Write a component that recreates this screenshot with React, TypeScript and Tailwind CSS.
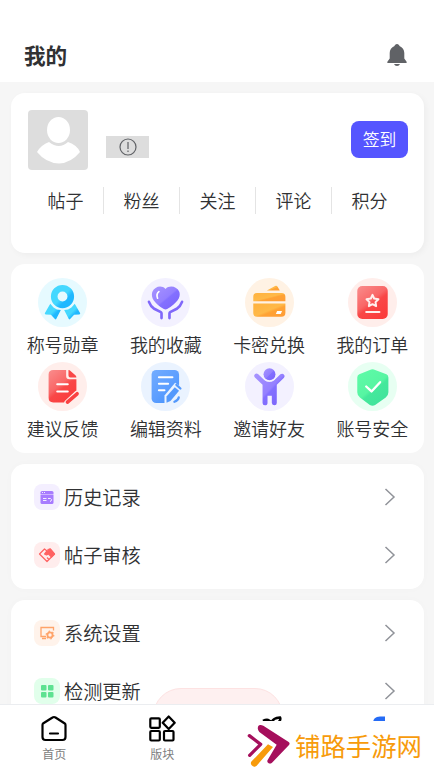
import type { ReactNode } from "react"

const stats = ["帖子", "粉丝", "关注", "评论", "积分"]

function Gradients() {
  return (
    <svg className="absolute h-0 w-0" aria-hidden="true">
      <defs>
        <linearGradient id="cyan" x1="0" y1="0" x2="1" y2="1">
          <stop offset="0.5" stopColor="#45d8ff" />
          <stop offset="0.65" stopColor="#20b8ff" />
        </linearGradient>
        <linearGradient id="purple" x1="0" y1="0" x2="1" y2="1">
          <stop offset="0" stopColor="#a794ff" />
          <stop offset="0.5" stopColor="#9480ff" />
          <stop offset="0.55" stopColor="#8370ff" />
          <stop offset="1" stopColor="#7a62fa" />
        </linearGradient>
        <linearGradient id="orange" x1="0" y1="0" x2="1" y2="1">
          <stop offset="0" stopColor="#ffb23f" />
          <stop offset="0.5" stopColor="#ffb948" />
          <stop offset="0.6" stopColor="#ffa234" />
          <stop offset="1" stopColor="#ff9c36" />
        </linearGradient>
        <linearGradient id="red" x1="0" y1="0" x2="0.7" y2="1">
          <stop offset="0" stopColor="#f98d8d" />
          <stop offset="0.5" stopColor="#f96666" />
          <stop offset="0.62" stopColor="#f94747" />
          <stop offset="1" stopColor="#fb3c3c" />
        </linearGradient>
        <linearGradient id="blue" x1="0" y1="0" x2="0.8" y2="1">
          <stop offset="0" stopColor="#73acff" />
          <stop offset="0.6" stopColor="#5c9eff" />
          <stop offset="1" stopColor="#4592fc" />
        </linearGradient>
        <linearGradient id="green" x1="0" y1="0" x2="0.7" y2="1">
          <stop offset="0" stopColor="#5ffba8" />
          <stop offset="0.57" stopColor="#57f5a2" />
          <stop offset="0.65" stopColor="#45e89b" />
          <stop offset="1" stopColor="#40e39c" />
        </linearGradient>
      </defs>
    </svg>
  )
}

const shortcuts: { label: string; bg: string; icon: ReactNode }[] = [
  {
    label: "称号勋章",
    bg: "#e6faff",
    icon: (
      <g fill="url(#cyan)">
        <path fillRule="evenodd" d="M74 21a35 35 0 1 0 0 70 35 35 0 0 0 0-70Zm0 20a15 15 0 1 1 0 30 15 15 0 0 1 0-30Z" />
        <path d="m37 78 10 11q9 8 22 8l-14 27q-2 3-4 0L39 111l-16-1q-4-1-2-4Z" />
        <path d="m111 78-10 11q-9 8-22 8l14 27q2 3 4 0l12-13 16-1q4-1 2-4Z" />
      </g>
    ),
  },
  {
    label: "我的收藏",
    bg: "#f3f1ff",
    icon: (
      <g>
        <path fill="url(#purple)" d="M74 33C62 20 42 25 34 42c-5 18 6 33 35 52q5 3 10 0c29-19 42-34 37-52-7-17-30-22-42-9Z" />
        <path d="M54 41q-9 7-4 20" fill="none" stroke="#fff" strokeWidth="5" strokeLinecap="round" />
        <path d="M24 72q5 14 16 21l20 10q2 1 2 4v14M124 72q-5 14-16 21l-20 10q-2 1-2 4v14" fill="none" stroke="#8068fa" strokeWidth="8" strokeLinecap="round" />
      </g>
    ),
  },
  {
    label: "卡密兑换",
    bg: "#fff2e4",
    icon: (
      <g fill="url(#orange)">
        <path d="m66 38 25-14q5-2 8 3l6 11Z" />
        <path d="M36 45h75q11 0 11 12v13H25V57q0-12 11-12Z" />
        <path d="M25 77h97v28q0 12-12 12H37q-12 0-12-12Z" />
        <path d="M97 100h15l-4 9H93Z" fill="#fff" />
      </g>
    ),
  },
  {
    label: "我的订单",
    bg: "#ffeeeb",
    icon: (
      <g>
        <rect x="28" y="24" width="92" height="100" rx="15" fill="url(#red)" />
        <path d="m74 51 5 11 13 2-9 9 2 12-11-6-11 6 2-12-9-9 13-2Z" fill="none" stroke="#fff0ee" strokeWidth="6" strokeLinejoin="round" />
        <path d="M55 103h40" stroke="#fff0ee" strokeWidth="6" strokeLinecap="round" />
      </g>
    ),
  },
  {
    label: "建议反馈",
    bg: "#ffeeeb",
    icon: (
      <g>
        <path fill="url(#red)" d="M46 24h39v18q0 10 10 10h21v42l-30 28H46q-14 0-14-14V38q0-14 14-14Z" />
        <path fill="#f94747" d="M92 24q4 0 7 4l14 12q3 3 3 7H98q-6 0-6-6Z" />
        <path d="M58 67h32M58 89h32" stroke="#fff" strokeWidth="6" strokeLinecap="round" />
        <path d="m89 123 29-27" stroke="#ffeeeb" strokeWidth="19" strokeLinecap="round" />
        <path d="m89 121 29-25" stroke="#fa4242" strokeWidth="11" strokeLinecap="round" />
      </g>
    ),
  },
  {
    label: "编辑资料",
    bg: "#eaf3ff",
    icon: (
      <g>
        <rect x="32" y="24" width="83" height="100" rx="14" fill="url(#blue)" />
        <path d="M54 46h41M54 66h28M54 85h17" stroke="#fff" strokeWidth="6" strokeLinecap="round" />
        <path d="M71 127v-26l32-38 22 14-4 50Z" fill="#eaf3ff" />
        <path d="m77 104 25-28 13 11-26 31-12 5Z" fill="#5499fc" />
        <path d="m107 69 12 11M101 120q11-4 13-13" fill="none" stroke="#5499fc" strokeWidth="7" strokeLinecap="round" />
      </g>
    ),
  },
  {
    label: "邀请好友",
    bg: "#f3f1ff",
    icon: (
      <g>
        <path fill="url(#purple)" d="M40 37 58 54q16 12 31 0l18-17c8-6 17 4 10 11L96 69v55q0 7-7 7t-8-7v-22H68v22q0 7-8 7-7 0-7-7V69L30 47c-7-7 3-16 10-10Z" />
        <circle cx="74" cy="38" r="22" fill="#f3f1ff" />
        <circle cx="74" cy="37" r="18" fill="url(#purple)" />
      </g>
    ),
  },
  {
    label: "账号安全",
    bg: "#e7fff2",
    icon: (
      <g>
        <path fill="url(#green)" d="M66 24q8-4 16 0l34 13q6 3 6 10v44q0 10-8 16l-32 23q-8 5-16 0l-30-23q-8-6-8-16V47q0-7 6-10Z" />
        <path d="m55 74 16 15 26-28" fill="none" stroke="#fff" strokeWidth="7" strokeLinecap="round" strokeLinejoin="round" />
      </g>
    ),
  },
]

function HistoryIcon() {
  return (
    <svg viewBox="0 0 26 26" className="h-[26px] w-[26px]">
      <path d="M8 7h10q1.500 0 1.500 1.500V10h-13V8.500Q6.500 7 8 7Z" fill="#a77bff" />
      <path d="M6.500 10.500h13v8q0 1.500-1.500 1.500H8q-1.500 0-1.500-1.500Z" fill="#a77bff" />
      <path d="M8 8.500h1M10 8.500h1M9 14.500h3.500M9 16.500h3.500M14 14.500h2.500q2 1 .5 2.500l-1 .5" fill="none" stroke="#f3edff" />
    </svg>
  )
}

function ReviewIcon() {
  return (
    <svg viewBox="0 0 26 26" className="h-[26px] w-[26px]" fill="none" stroke="#ff6262" strokeWidth="1.200" strokeLinejoin="round">
      <path d="m13 9-2.500-2L5.500 12l7.500 7.500 7.500-7.500-4-5-3 .5" />
      <path d="m12 10 4-3 4.500 5-3 3-3-3-2 1-2-1Z" fill="#ff6262" />
      <path d="m15 17.500-2-2" />
    </svg>
  )
}

function SettingIcon() {
  return (
    <svg viewBox="0 0 26 26" className="h-[26px] w-[26px]" fill="none" stroke="#ffa369" strokeWidth="1.300">
      <path d="M12 16.500H7v-9h12.500v3M8 18.500h4" />
      <circle cx="16" cy="15" r="2.600" strokeWidth="1.800" />
      <circle cx="16" cy="15" r="3.800" strokeDasharray="1.500 2.480" strokeWidth="1.200" />
    </svg>
  )
}

function UpdateIcon() {
  return (
    <svg viewBox="0 0 26 26" className="h-[26px] w-[26px]" fill="#5de291">
      <rect x="7" y="7" width="5.500" height="5.500" rx="1" />
      <rect x="14" y="7" width="5.500" height="5.500" rx="1" />
      <rect x="7" y="14" width="5.500" height="5.500" rx="1" />
      <rect x="14" y="14" width="5.500" height="5.500" rx="1" />
    </svg>
  )
}

function MenuRow({ label, tile, children }: { label: string; tile: string; children: ReactNode }) {
  return (
    <button className="flex h-[58px] w-full items-center pl-[23px] pr-7 text-left">
      <span className={`h-[26px] w-[26px] shrink-0 rounded-lg ${tile}`}>{children}</span>
      <span className="ml-1 flex-1 text-[19.2px] leading-7">{label}</span>
      <svg viewBox="0 0 12 18" className="h-[18px] w-3" fill="none" stroke="#909399" strokeWidth="1.500">
        <path d="m1.500 1 8.500 8-8.500 8" />
      </svg>
    </button>
  )
}

function Watermark() {
  return (
    <div className="absolute bottom-0 right-0 flex h-[50px] w-[190px] items-center bg-white">
      <svg viewBox="21 42 132 132" className="ml-[3px] h-11 w-11" strokeLinecap="round" strokeLinejoin="round">
        <path d="m28 77 34 26-33 33" fill="none" stroke="#a50f5c" strokeWidth="10" />
        <path d="M57 46q5-3 13 1l76 49q5 4 1 9l-51 53q-6 5-11 1-5-4-2-9l27-46L58 66q-9-12-1-20Z" fill="#a50f5c" />
        <path d="m84 103 15 8-49 56q-8 7-15-1-5-7 0-12Z" fill="#f79b0b" />
      </svg>
      <span className="ml-1 mt-[-2px] whitespace-nowrap text-[25.400px] font-normal leading-8 text-[#f79b0b]">铺路手游网</span>
    </div>
  )
}

export default function App() {
  return (
    <div className="relative flex h-screen flex-col overflow-hidden bg-[#f6f6f6] font-['Noto_Sans_CJK_SC',sans-serif] font-[350] text-[#303133]">
      <Gradients />
      <header className="flex h-[82px] shrink-0 items-end justify-between bg-white pb-[11px] pl-6 pr-[26px]">
        <h1 className="text-[21.600px] font-bold leading-8">我的</h1>
        <svg viewBox="0 0 22 24" className="mb-1 h-6 w-[22px]" fill="#606266">
          <path d="M11 1c1.500 0 2.200 1 2.500 2 3 1.200 4.800 4 4.800 7v5.500l2.300 3.300c.5.700.3 1.200-.6 1.200H2c-.9 0-1.100-.5-.6-1.200l2.300-3.300V10c0-3 1.800-5.800 4.800-7C8.800 2 9.500 1 11 1Z" />
          <path d="M8 21h6q-.8 2-3 2t-3-2Z" />
        </svg>
      </header>

      <main className="flex min-h-0 flex-1 flex-col gap-[11px] overflow-hidden pl-[11px] pr-2.5 pt-[11px]">
        <section className="h-40 shrink-0 rounded-[14px] bg-white px-[17px] pt-[17px] shadow-[2px_2px_6px_rgba(0,0,0,0.04)]">
          <div className="flex h-[60px] items-start">
            <svg viewBox="0 0 60 60" className="h-[60px] w-[60px] rounded">
              <rect width="60" height="60" fill="#ddd" />
              <ellipse cx="30.500" cy="20" rx="11.500" ry="13" fill="#fff" />
              <path d="M21 32q10 8 19 0 9 3 12 10-9 11-21 11.500Q18 53 9 42q4-7 12-10Z" fill="#fff" />
            </svg>
            <div className="ml-[18px] mt-[26px] flex h-[22px] w-[43px] items-center justify-center bg-[#ddd]">
              <svg viewBox="0 0 18 18" className="h-[18px] w-[18px]" fill="none" stroke="#606266" strokeWidth="1.200">
                <circle cx="9" cy="9" r="8" />
                <path d="M9 4v7M9 12.500V14" />
              </svg>
            </div>
            <button className="-mr-px ml-auto mt-[11px] h-[37px] w-[57px] rounded-lg bg-[#5555ff] pb-px text-[16.800px] leading-[35px] text-white">签到</button>
          </div>
          <div className="-ml-px mt-[17px] flex w-[380px]">
            {stats.map((item) => (
              <div key={item} className="flex h-[27px] flex-1 items-center justify-center border-l border-[#e4e4e4] text-[18px] first:border-transparent">
                {item}
              </div>
            ))}
          </div>
        </section>

        <section className="grid h-[189px] shrink-0 grid-cols-4 content-start rounded-[14px] bg-white pt-[14px]">
          {shortcuts.map((item) => (
            <button key={item.label} className="flex h-[84px] flex-col items-center">
              <svg viewBox="0 0 148 148" className="h-[49px] w-[49px] shrink-0">
                <circle cx="74" cy="74" r="74" fill={item.bg} />
                {item.icon}
              </svg>
              <span className="mt-1 whitespace-nowrap text-[18px] leading-[26px]">{item.label}</span>
            </button>
          ))}
        </section>

        <section className="h-[125px] shrink-0 rounded-[14px] bg-white pt-1 shadow-[0_0_8px_rgba(0,0,0,0.02)]">
          <MenuRow label="历史记录" tile="bg-[#f4efff]"><HistoryIcon /></MenuRow>
          <MenuRow label="帖子审核" tile="bg-[#ffeded]"><ReviewIcon /></MenuRow>
        </section>

        <section className="h-[125px] shrink-0 rounded-[14px] bg-white pt-1 shadow-[0_0_8px_rgba(0,0,0,0.02)]">
          <MenuRow label="系统设置" tile="bg-[#fff3eb]"><SettingIcon /></MenuRow>
          <MenuRow label="检测更新" tile="bg-[#e1ffeb]"><UpdateIcon /></MenuRow>
        </section>
      </main>

      {/* floating button, mostly tucked behind the tab bar */}
      <div className="absolute bottom-[27px] left-[153px] h-14 w-[130px] rounded-full border border-[#fde2e2] bg-[#fef0f0]" />

      <nav className="relative grid h-[67px] shrink-0 grid-cols-4 border-t border-[#ebedf0] bg-white">
        <div className="flex flex-col items-center pt-[9px]">
          <svg viewBox="0 0 28 28" className="h-7 w-7" fill="none" stroke="#000" strokeWidth="2.200" strokeLinejoin="round" strokeLinecap="round">
            <path d="M3 9.500Q2.500 10 2.500 11v12q0 3 3 3h17q3 0 3-3V11q0-1-.7-1.500L15.500 3.500q-1.500-1-3 0ZM10 19.500h8" />
          </svg>
          <span className="mt-1 text-[12px] font-normal leading-4 text-[#7d7e80]">首页</span>
        </div>
        <div className="flex flex-col items-center pr-px pt-[9px]">
          <svg viewBox="0 0 28 28" className="h-7 w-7" fill="none" stroke="#000" strokeWidth="2.200" strokeLinejoin="round">
            <rect x="2.300" y="4.300" width="9.500" height="9.500" rx="1" />
            <rect x="2.300" y="17" width="9.500" height="9.500" rx="1" />
            <rect x="16" y="17" width="9.500" height="9.500" rx="1" />
            <path d="m20.700 2.500 6 6.200-6 6.300-6-6.300Z" />
          </svg>
          <span className="mt-1 text-[12px] font-normal leading-4 text-[#7d7e80]">版块</span>
        </div>
        <div className="flex flex-col items-center pt-[10px]">
          <svg viewBox="0 0 28 28" className="h-7 w-7" fill="none" stroke="#000" strokeWidth="2.600">
            <path d="M6 6q4-2 6-.5t3 .5M15 7q1-4 8-4.500Q24 4 22 7" />
          </svg>
        </div>
        <div className="flex flex-col items-center pr-1 pt-[10px]">
          <svg viewBox="0 0 28 28" className="h-7 w-7" fill="#256bf5">
            <path d="M9 8q0-6.500 7-6.500h5V8Z" />
          </svg>
        </div>
      </nav>

      <Watermark />
    </div>
  )
}
